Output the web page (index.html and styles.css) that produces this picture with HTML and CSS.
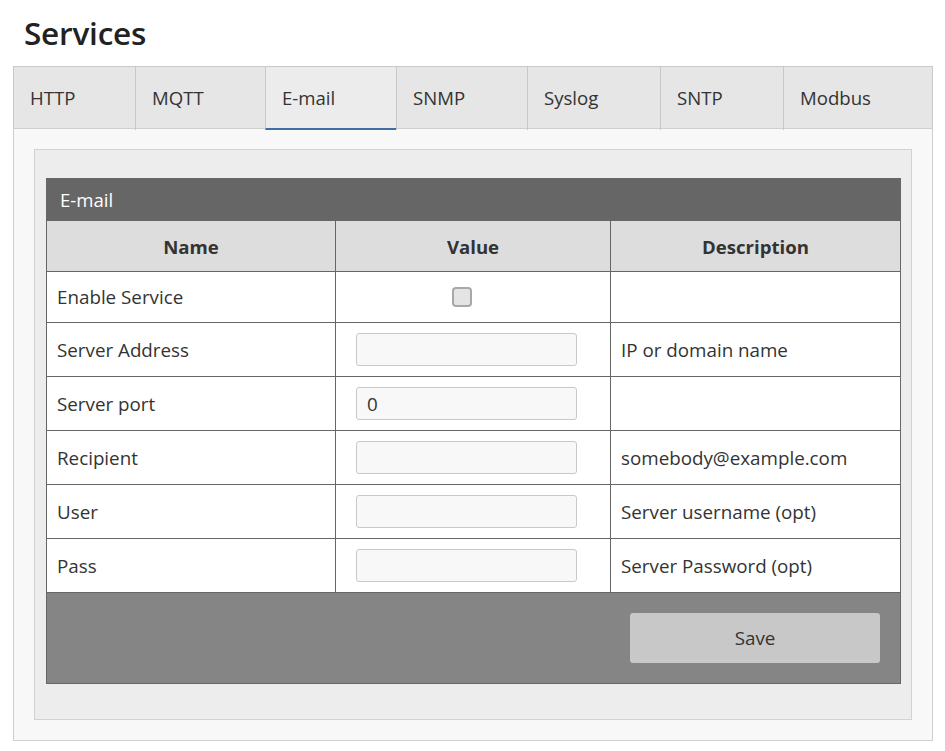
FILE: index.html
```html
<!DOCTYPE html>
<html>
<head>
<meta charset="utf-8">
<link rel="stylesheet" href="styles.css">
</head>
<body>
<div class="page">
  <h1 class="title">Services</h1>
  <div class="tabs">
    <div class="tab">HTTP</div>
    <div class="tab">MQTT</div>
    <div class="tab active">E-mail</div>
    <div class="tab">SNMP</div>
    <div class="tab">Syslog</div>
    <div class="tab">SNTP</div>
    <div class="tab">Modbus</div>
  </div>
  <div class="panel">
    <div class="inner">
      <table class="grid">
        <thead>
          <tr><th class="caption" colspan="3">E-mail</th></tr>
          <tr class="head">
            <th class="c-name">Name</th>
            <th class="c-value">Value</th>
            <th class="c-desc">Description</th>
          </tr>
        </thead>
        <tbody>
          <tr class="row-check">
            <td>Enable Service</td>
            <td class="val center"><span class="checkbox"></span></td>
            <td></td>
          </tr>
          <tr>
            <td>Server Address</td>
            <td class="val"><input class="field" type="text" value=""></td>
            <td>IP or domain name</td>
          </tr>
          <tr>
            <td>Server port</td>
            <td class="val"><input class="field" type="text" value="0"></td>
            <td></td>
          </tr>
          <tr>
            <td>Recipient</td>
            <td class="val"><input class="field" type="text" value=""></td>
            <td>somebody@example.com</td>
          </tr>
          <tr>
            <td>User</td>
            <td class="val"><input class="field" type="text" value=""></td>
            <td>Server username (opt)</td>
          </tr>
          <tr>
            <td>Pass</td>
            <td class="val"><input class="field" type="text" value=""></td>
            <td>Server Password (opt)</td>
          </tr>
        </tbody>
        <tfoot>
          <tr><td class="foot" colspan="3"><div class="foot-bar"><button class="save">Save</button></div></td></tr>
        </tfoot>
      </table>
    </div>
  </div>
</div>
</body>
</html>
```
FILE: styles.css
```css
* { box-sizing: border-box; }
html, body { margin: 0; padding: 0; background: #fff; }
body {
  font-family: "Open Sans", "Noto Sans", sans-serif;
  color: #333;
  font-size: 17px;
}
.page {
  padding: 0 12px 0 13px;
}
.title {
  margin: 0;
  padding: 13px 0 0 11px;
  height: 66px;
  font-size: 31.5px;
  font-weight: 600;
  color: #222;
  letter-spacing: -0.2px;
  line-height: 40px;
}
.tabs {
  display: grid;
  grid-template-columns: 121px 130px 131px 131px 133px 123px 1fr;
  border: 1px solid #c8c8c8;
  border-bottom: none;
  background: #e6e6e6;
  height: 62px;
}
.tab {
  border-left: 1px solid #c8c8c8;
  padding-left: 16px;
  line-height: 61px;
  font-size: 18.6px;
  color: #333;
}
.tab:first-child { border-left: none; padding-left: 16px; }
.tab.active {
  background: #ececec;
  border-bottom: 2px solid #3f6ea3;
}
.panel {
  border: 1px solid #cfcfcf;
  background: #f8f8f8;
  padding: 20px;
}
.inner {
  border: 1px solid #d2d2d2;
  background: #ededed;
  padding: 28px 10px 35px 11px;
}
.grid {
  width: 100%;
  border-collapse: collapse;
  background: #fff;
  border: 1px solid #666;
}
.caption {
  background: #666;
  color: #fff;
  text-align: left;
  font-weight: 400;
  height: 42px;
  padding: 0 13px;
  font-size: 18.6px;
}
.head th {
  background: #ddd;
  height: 51px;
  border: 1px solid #666;
  font-weight: 700;
  font-size: 18.6px;
  color: #333;
}
.c-name { width: 289px; }
.c-value { width: 275px; }
td {
  border: 1px solid #666;
  padding: 0 10px;
  height: 54px;
  font-size: 18.8px;
  color: #333;
}
.row-check td { height: 51px; }
td.val { padding: 0 20px; }
td.center { text-align: center; }
.checkbox {
  display: inline-block;
  width: 20px;
  height: 20px;
  border: 2px solid #a8a8a8;
  border-radius: 4px;
  background: #e4e4e4;
  vertical-align: middle;
  margin-right: 22px;
  margin-top: -3px;
}
.field {
  width: 221px;
  height: 33px;
  border: 1px solid #c8c8c8;
  border-radius: 3px;
  background: #f8f8f8;
  padding: 0 10px;
  font-family: inherit;
  font-size: 18.8px;
  color: #333;
  display: block;
}
td.foot {
  background: #858585;
  height: 91px;
  padding: 0;
}
.foot-bar {
  display: flex;
  justify-content: flex-end;
  padding: 20px 20px 20px 0;
}
.save {
  width: 250px;
  height: 50px;
  border: none;
  border-radius: 3px;
  background: #c8c8c8;
  font-family: inherit;
  font-size: 18.8px;
  color: #333;
}
```
